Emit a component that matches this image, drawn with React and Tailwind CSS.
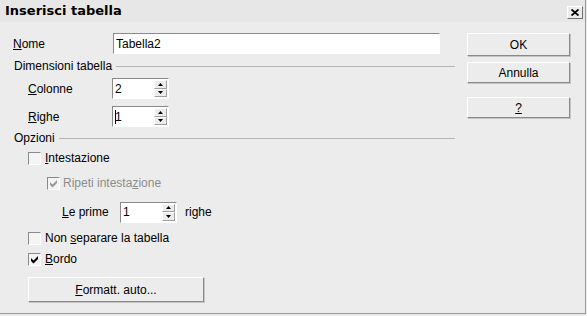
import React from 'react';

const font = { fontFamily: '"Liberation Sans", Arial, sans-serif' };

const U = ({ children }) => <span className="underline underline-offset-[1px]">{children}</span>;

const Spin = ({ value, caret }) => (
  <div className="flex h-[21px] w-[57px] items-stretch border-t border-l border-[#8a8a8a] border-r border-b border-r-white border-b-white bg-white">
    <div className="flex flex-1 items-center pl-[2px] text-[12px] text-black">
      {caret && <span className="mr-[-1px] h-[14px] w-px bg-black" />}
      {value}
    </div>
    <div className="my-px mr-px flex w-[13px] flex-col">
      <div className="flex flex-1 items-center justify-center border border-t-white border-l-white border-r-[#a0a0a0] border-b-[#a0a0a0] bg-[#ececec]">
        <svg width="5" height="3" viewBox="0 0 5 3"><path d="M2.5 0 L5 3 L0 3 Z" fill="#000" /></svg>
      </div>
      <div className="flex flex-1 items-center justify-center border border-t-white border-l-white border-r-[#a0a0a0] border-b-[#a0a0a0] bg-[#ececec]">
        <svg width="5" height="3" viewBox="0 0 5 3"><path d="M0 0 L5 0 L2.5 3 Z" fill="#000" /></svg>
      </div>
    </div>
  </div>
);

const Check = ({ checked, disabled }) => (
  <div className="flex h-[13px] w-[13px] items-center justify-center border-t border-l border-[#8a8a8a] border-r border-b border-r-white border-b-white bg-[#f4f4f4]">
    {checked && (
      <svg width="9" height="9" viewBox="0 0 9 9">
        <path d="M1 3 L3.5 5.5 L8 1 L8 4 L3.5 8.5 L1 6 Z" fill={disabled ? '#9a9a9a' : '#000'} />
      </svg>
    )}
  </div>
);

const Header = ({ children }) => (
  <div className="flex h-[16px] items-center">
    <span className="text-[12px] text-black">{children}</span>
    <div className="ml-[4px] flex-1 border-t border-[#b4b4b4] border-b-white" />
  </div>
);

const Btn = ({ children, className = '' }) => (
  <button className={`flex items-center justify-center border border-t-white border-l-white border-r-[#8a8a8a] border-b-[#8a8a8a] bg-[#ececec] text-[12px] text-black shadow-[1px_1px_0_#c4c4c4] ${className}`}>
    {children}
  </button>
);

export default function App() {
  return (
    <div className="relative h-[316px] w-[587px] overflow-hidden bg-[#ececec]" style={font}>
      <div className="flex h-[22px] items-center justify-between bg-[#e7e7e7] pl-[5px] pr-[4px]">
        <span className="text-[13px] font-bold text-black" style={{ fontFamily: '"DejaVu Sans", sans-serif' }}>
          Inserisci tabella
        </span>
        <div className="mt-[2px] flex h-[13px] w-[16px] items-center justify-center border border-t-white border-l-white border-r-[#707070] border-b-[#707070] bg-[#ececec]">
          <svg width="8" height="7" viewBox="0 0 8 7">
            <path d="M0.5 0.5 L7.5 6.5 M7.5 0.5 L0.5 6.5" stroke="#000" strokeWidth="1.8" />
          </svg>
        </div>
      </div>

      <div className="flex">
        <div className="w-[455px] pl-[13px]">
          <div className="mt-[11px] flex h-[21px] items-center">
            <span className="w-[100px] text-[12px]"><U>N</U>ome</span>
            <div className="flex h-[21px] w-[327px] items-center border-t border-l border-[#8a8a8a] border-r border-b border-r-white border-b-white bg-white pl-[2px] text-[12px]">
              Tabella2
            </div>
          </div>

          <div className="mt-[4px] pl-[1px]">
            <Header>Dimensioni tabella</Header>
          </div>

          <div className="mt-[4px] flex h-[21px] items-center pl-[15px]">
            <span className="w-[84px] text-[12px]"><U>C</U>olonne</span>
            <Spin value="2" />
          </div>
          <div className="mt-[7px] flex h-[21px] items-center pl-[15px]">
            <span className="w-[84px] text-[12px]"><U>R</U>ighe</span>
            <Spin value="1" caret />
          </div>

          <div className="mt-[3px] pl-[1px]">
            <Header>Opzioni</Header>
          </div>

          <div className="mt-[4px] flex h-[16px] items-center gap-[4px] pl-[15px] text-[12px]">
            <Check />
            <span><U>I</U>ntestazione</span>
          </div>
          <div className="mt-[9px] flex h-[16px] items-center gap-[3px] pl-[34px] text-[12px] text-[#8c8c8c]">
            <Check checked disabled />
            <span>Ripeti intesta<U>z</U>ione</span>
          </div>
          <div className="mt-[11px] flex h-[20px] items-center pl-[49px] text-[12px]">
            <span className="w-[58px]"><U>L</U>e prime</span>
            <Spin value="1" />
            <span className="ml-[8px]">righe</span>
          </div>
          <div className="mt-[8px] flex h-[16px] items-center gap-[4px] pl-[15px] text-[12px]">
            <Check />
            <span>Non <U>s</U>eparare la tabella</span>
          </div>
          <div className="mt-[5px] flex h-[16px] items-center gap-[4px] pl-[15px] text-[12px]">
            <Check checked />
            <span><U>B</U>ordo</span>
          </div>
          <div className="mt-[10px] pl-[15px]">
            <Btn className="h-[25px] w-[176px]"><U>F</U>ormatt. auto...</Btn>
          </div>
        </div>

        <div className="ml-[12px] flex flex-col pt-[11px]">
          <Btn className="h-[23px] w-[103px]">OK</Btn>
          <Btn className="mt-[6px] h-[21px] w-[103px]">Annulla</Btn>
          <Btn className="mt-[14px] h-[21px] w-[103px]"><U>?</U></Btn>
        </div>
      </div>

      <div className="absolute right-[1px] top-0 h-[314px] w-px bg-[#9a9a9a]" />
      <div className="absolute bottom-[2px] left-0 h-px w-[586px] bg-[#9a9a9a]" />
    </div>
  );
}
